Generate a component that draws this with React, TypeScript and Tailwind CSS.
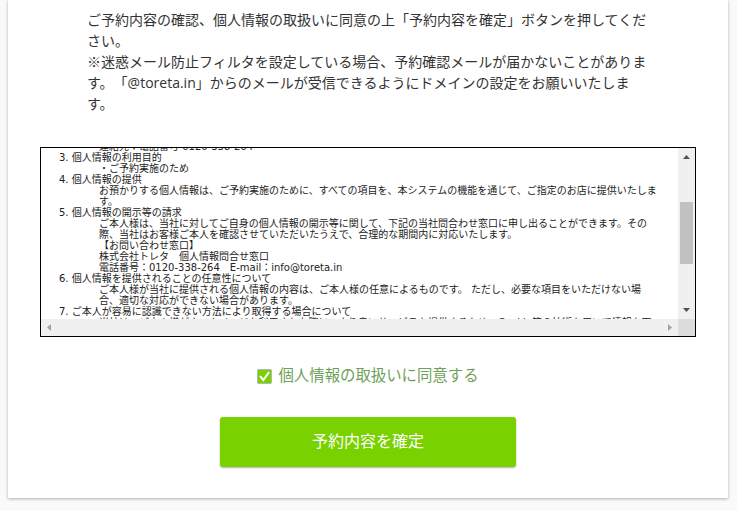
const policy = [
  { head: "3. 個人情報の利用目的", body: ["・ご予約実施のため"] },
  {
    head: "4. 個人情報の提供",
    body: ["お預かりする個人情報は、ご予約実施のために、すべての項目を、本システムの機能を通じて、ご指定のお店に提供いたします。"],
  },
  {
    head: "5. 個人情報の開示等の請求",
    body: [
      "ご本人様は、当社に対してご自身の個人情報の開示等に関して、下記の当社問合わせ窓口に申し出ることができます。その際、当社はお客様ご本人を確認させていただいたうえで、合理的な期間内に対応いたします。",
      "【お問い合わせ窓口】",
      "株式会社トレタ　個人情報問合せ窓口",
      "電話番号：0120-338-264　E-mail：info@toreta.in",
    ],
  },
  {
    head: "6. 個人情報を提供されることの任意性について",
    body: ["ご本人様が当社に提供される個人情報の内容は、ご本人様の任意によるものです。 ただし、必要な項目をいただけない場合、適切な対応ができない場合があります。"],
  },
  {
    head: "7. ご本人が容易に認識できない方法により取得する場合について",
    body: ["当社は、ご本人様がホームページを利用された際に、より良いサービスを提供するため、Cookie等の技術を用いて情報を取得する場合があります。あらかじめご了承ください。"],
  },
];

export default function App() {
  return (
    <div className="h-[511px] overflow-hidden bg-[#fafafa] px-2 font-['Open_Sans','Noto_Sans_CJK_JP',sans-serif] [text-spacing-trim:space-all]">
      <div className="flex h-[498px] w-[720px] flex-col bg-white shadow-[0_1px_3px_rgba(0,0,0,0.3)]">
        <p className="mt-[9px] ml-[79px] w-[566px] text-[14px] leading-[21px] text-[#333]">
          ご予約内容の確認、個人情報の取扱いに同意の上「予約内容を確定」ボタンを押してください。
          <br />
          ※迷惑メール防止フィルタを設定している場合、予約確認メールが届かないことがあります。「@toreta.in」からのメールが受信できるようにドメインの設定をお願いいたします。
        </p>

        <div className="mt-[33px] ml-8 flex h-[190px] w-[656px] flex-col border border-black">
          <div className="flex min-h-0 flex-1">
            <div className="min-w-0 flex-1 overflow-hidden pl-[18px] pr-[19px] font-['DejaVu_Sans','Noto_Sans_CJK_JP',sans-serif] text-[10px] leading-[11px] text-[#222]">
              <div className="-mt-[7px] pl-[40px]">連絡先：電話番号 0120-338-264</div>
              {policy.map((p) => (
                <div key={p.head}>
                  <div>{p.head}</div>
                  <div className="pl-[40px]">
                    {p.body.map((b) => (
                      <div key={b}>{b}</div>
                    ))}
                  </div>
                </div>
              ))}
            </div>
            <div className="flex w-[17px] flex-col items-center bg-[#f0f0f0] py-[7px]">
              <svg width="7" height="4" viewBox="0 0 7 4" className="fill-[#505050]">
                <path d="M3.5 0 7 4H0z" />
              </svg>
              <div className="mt-[43px] h-[62px] w-[13px] bg-[#c1c1c1]" />
              <svg width="7" height="4" viewBox="0 0 7 4" className="mt-auto fill-[#505050]">
                <path d="M0 0h7L3.5 4z" />
              </svg>
            </div>
          </div>
          <div className="flex h-[17px] shrink-0 bg-[#f0f0f0]">
            <div className="flex flex-1 items-center justify-between px-[6px]">
              <svg width="4" height="7" viewBox="0 0 4 7" className="fill-[#a3a3a3]">
                <path d="M4 0v7L0 3.5z" />
              </svg>
              <svg width="4" height="7" viewBox="0 0 4 7" className="fill-[#a3a3a3]">
                <path d="M0 0v7l4-3.5z" />
              </svg>
            </div>
            <div className="w-[17px] bg-[#dcdcdc]" />
          </div>
        </div>

        <div className="mt-[28px] flex items-center justify-center gap-[6px] text-[15.4px] leading-[22px] text-[#6f9f5a]">
          <svg width="15" height="15" viewBox="0 0 15 15">
            <rect x="0.5" y="0.5" width="14" height="14" rx="1" fill="#7ad000" stroke="#b5b5b5" />
            <path d="M3 7 6.3 11.2 12 3.2" fill="none" stroke="#fff" strokeWidth="2" />
          </svg>
          個人情報の取扱いに同意する
        </div>

        <button className="mx-auto mt-[30px] h-[50px] w-[296px] rounded-[3px] bg-[#79d100] pb-[2px] text-[16px] text-white shadow-[0_1px_2px_rgba(0,0,0,0.3)]">
          予約内容を確定
        </button>
      </div>
    </div>
  );
}
